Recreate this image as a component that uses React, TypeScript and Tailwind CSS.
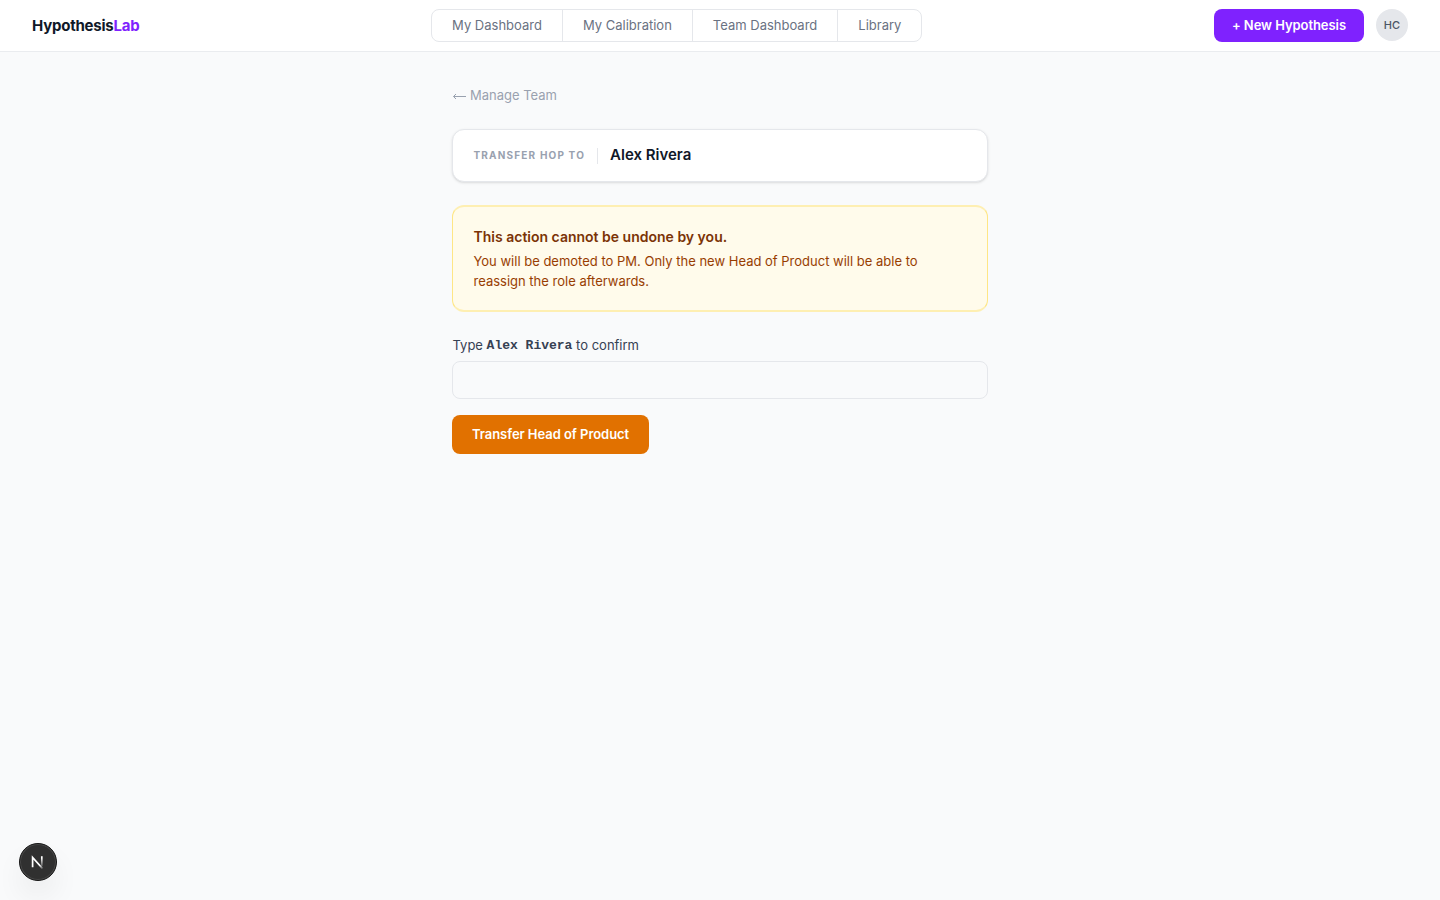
import React, { useState } from 'react';

const navItems = ['My Dashboard', 'My Calibration', 'Team Dashboard', 'Library'];

const Header: React.FC = () => (
  <header className="flex h-[52px] items-center justify-between border-b border-gray-200/80 bg-white px-8">
    <a href="#" className="pt-0.5 text-[15px] font-bold tracking-[-0.22px] text-gray-900">
      Hypothesis<span className="text-[#7f22fe]">Lab</span>
    </a>
    <nav className="flex overflow-hidden rounded-lg border border-gray-200">
      {navItems.map((item) => (
        <a
          key={item}
          href="#"
          className="border-r border-gray-200 px-5 py-1.5 text-[13px] leading-[19.5px] text-gray-500 last:border-r-0"
        >
          {item}
        </a>
      ))}
    </nav>
    <div className="flex items-center gap-3">
      <button className="rounded-lg bg-[#7f22fe] px-[18px] py-1.5 text-[13px] leading-[21px] font-semibold tracking-[-0.06px] text-white">
        + New Hypothesis
      </button>
      <div className="mb-px flex size-8 items-center justify-center rounded-full bg-gray-200 text-[11px] font-medium text-gray-600">
        HC
      </div>
    </div>
  </header>
);

const App: React.FC = () => {
  const [confirmName, setConfirmName] = useState('');

  return (
    <div className="min-h-screen bg-gray-50 font-['Inter',sans-serif]">
      <Header />
      <main className="mx-auto w-[536px] pt-[33px]">
        <a href="#" className="flex items-center gap-[3px] text-[13px] leading-5 text-gray-400">
          <svg width="15" height="8" viewBox="0 0 15 8" fill="none" stroke="currentColor" className="mt-0.5">
            <path d="M14 4.5H1.5M4 2L1.5 4.5L4 7" />
          </svg>
          Manage Team
        </a>

        <div className="mt-6 flex h-[53px] items-center gap-3 rounded-xl border border-gray-200 bg-white px-5 shadow-sm">
          <span className="pl-[0.5px] text-[10px] font-bold tracking-[1.18px] text-gray-400 uppercase">Transfer HoP to</span>
          <span className="h-4 w-px bg-gray-200" />
          <span className="text-[15px] font-semibold text-gray-900">Alex Rivera</span>
        </div>

        <div className="mt-[23px] rounded-xl border-x border-y-2 border-x-amber-200 border-y-[#feefb2] bg-amber-50 pt-5 pr-5 pb-[19px] pl-[20.5px]">
          <p className="text-sm font-semibold text-amber-900">This action cannot be undone by you.</p>
          <p className="mt-1 text-[13px] leading-5 text-amber-800">
            You will be demoted to PM. Only the new Head of Product will be able to reassign the role afterwards.
          </p>
        </div>

        <label className="mt-[23px] block h-5 pl-[0.5px] text-[13px] leading-5 text-gray-700">
          Type <span className="align-[1px] font-['Liberation_Mono',monospace] font-semibold">Alex Rivera</span> to confirm
        </label>
        <input
          value={confirmName}
          onChange={(e) => setConfirmName(e.target.value)}
          className="mt-1.5 block h-[38px] w-full rounded-lg border border-gray-200 px-3 text-sm outline-none"
        />
        <button className="mt-4 h-[39px] rounded-lg bg-[#e17100] px-5 text-[13px] font-semibold tracking-[-0.05px] text-white">
          Transfer Head of Product
        </button>
      </main>

      {/* Dev tools badge */}
      <button className="fixed bottom-[19px] left-[19px] flex size-[38px] items-center justify-center rounded-full border border-[#171717] bg-[#303030] shadow-[inset_0_0_0_1px_#484848,0_16px_32px_-8px_rgba(0,0,0,0.16)]">
        <svg width="14" height="14" viewBox="0 0 14 14" fill="none" strokeWidth="1.7">
          <defs>
            <linearGradient id="diagonal" x1="9" y1="10" x2="12.5" y2="14" gradientUnits="userSpaceOnUse">
              <stop stopColor="white" />
              <stop offset="1" stopColor="white" stopOpacity="0" />
            </linearGradient>
            <linearGradient id="stem" x1="11" y1="3" x2="11" y2="12" gradientUnits="userSpaceOnUse">
              <stop stopColor="white" />
              <stop offset="1" stopColor="white" stopOpacity="0.1" />
            </linearGradient>
          </defs>
          <path d="M1.6 12.2V2.4L11.6 13.6" stroke="url(#diagonal)" />
          <path d="M10.8 1.2v10" stroke="url(#stem)" />
        </svg>
      </button>
    </div>
  );
};

export default App;
